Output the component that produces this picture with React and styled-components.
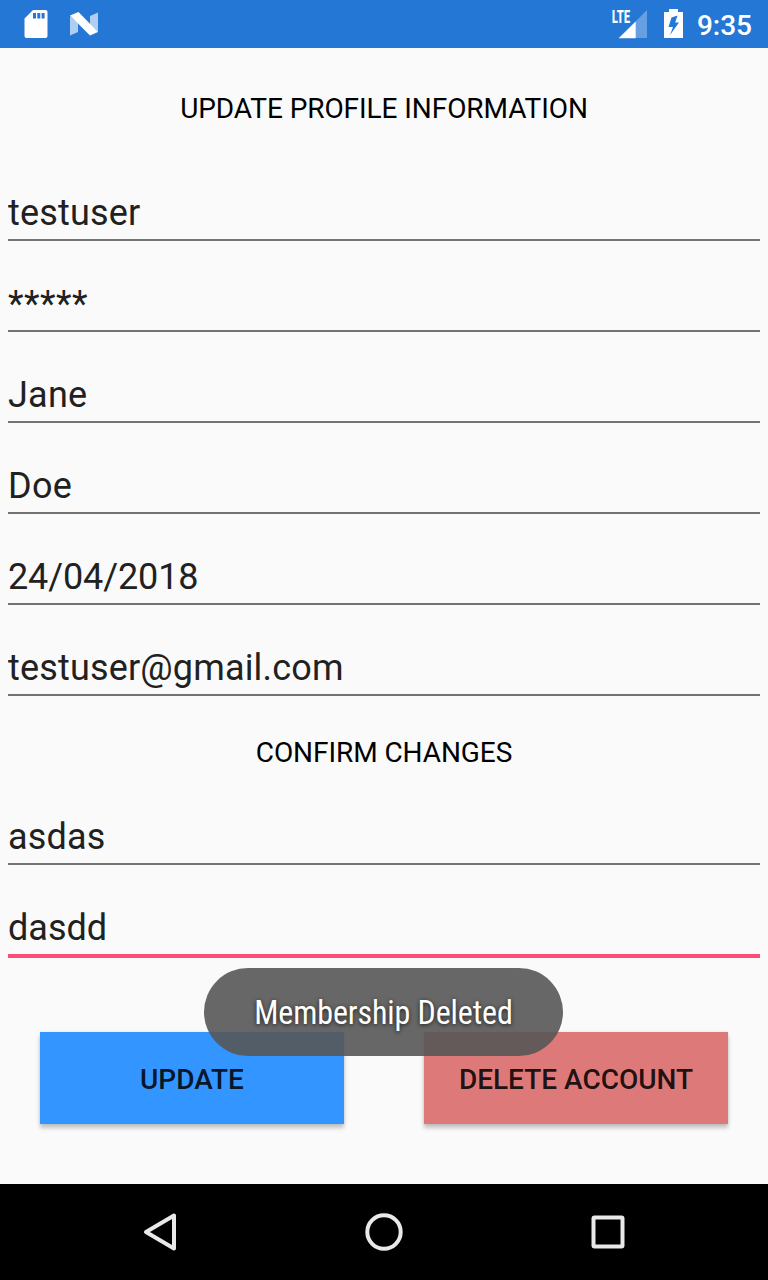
import React from "react";
import styled, { createGlobalStyle } from "styled-components";

const GlobalStyle = createGlobalStyle`
  * { box-sizing: border-box; }
  body { margin: 0; background: #fafafa; font-family: Roboto, sans-serif; }
`;

const Screen = styled.div`
  position: relative;
  display: flex;
  flex-direction: column;
  width: 768px;
  height: 1280px;
  overflow: hidden;
  background: #fafafa;
`;

const StatusBar = styled.header`
  display: flex;
  justify-content: space-between;
  flex: 0 0 48px;
  padding: 0 16px 0 20px;
  background: #2477d5;
`;

const StatusGroup = styled.div`
  display: flex;
  align-items: center;
`;

const Clock = styled.span`
  margin-left: 9px;
  padding-top: 3px;
  color: #fff;
  font-size: 28px;
  font-weight: 500;
  line-height: 45px;
`;

const Form = styled.main`
  display: flex;
  flex-direction: column;
  flex: 1;
`;

const Heading = styled.h1`
  margin: 0;
  height: ${(p) => p.$height}px;
  padding-top: ${(p) => p.$top}px;
  color: #000;
  font-size: 28px;
  font-weight: 400;
  letter-spacing: -0.07px;
  line-height: 34px;
  text-align: center;
`;

const Field = styled.label`
  display: block;
  height: ${(p) => (p.$focused ? 93 : 91)}px;
  margin: 0 8px;
  border-bottom: ${(p) => (p.$focused ? "4px solid #fd4d77" : "2px solid #737373")};
`;

const Input = styled.input`
  display: block;
  width: 100%;
  height: 44px;
  margin-top: 41px;
  padding: 0;
  border: 0;
  outline: 0;
  background: transparent;
  color: #212121;
  font: 400 36px/44px Roboto, sans-serif;
  letter-spacing: ${(p) => p.$tracking || 0}px;
`;

const Actions = styled.div`
  display: flex;
  justify-content: space-between;
  padding: 74px 40px 0;
`;

const Button = styled.button`
  width: 304px;
  height: 92px;
  padding: 4px 0 0;
  border: 0;
  background: ${(p) => p.$color};
  box-shadow: 0 4px 4px rgba(0, 0, 0, 0.21), 0 0 3px rgba(0, 0, 0, 0.1);
  color: rgba(0, 0, 0, 0.87);
  font: 500 28px/34px Roboto, sans-serif;
`;

const Toast = styled.div`
  position: absolute;
  top: 968px;
  left: 204px;
  display: flex;
  align-items: center;
  justify-content: center;
  width: 359px;
  height: 88px;
  padding-top: 2px;
  border-radius: 44px;
  background: rgba(86, 86, 86, 0.9);
  color: #fff;
  font-family: "Roboto Condensed", Roboto, sans-serif;
  font-size: 32px;
  font-stretch: 75%;
  letter-spacing: -0.1px;
  text-shadow: 0 1px 4px rgba(0, 0, 0, 0.73);
  white-space: nowrap;
`;

const ToastText = styled.span`
  display: block;
  transform: scaleY(1.04);
`;

const NavBar = styled.nav`
  display: flex;
  align-items: center;
  justify-content: space-between;
  flex: 0 0 96px;
  padding: 0 136px;
  background: #000;
`;

const SignalLabel = styled.text`
  fill: #fff;
  font: 700 17.5px "Roboto Condensed", Roboto, sans-serif;
  font-stretch: 75%;
`;

const details = [
  { value: "testuser", tracking: 0.18 },
  { value: "*****", tracking: 0.5 },
  { value: "Jane", tracking: 0.25 },
  { value: "Doe", tracking: 0.3 },
  { value: "24/04/2018", tracking: -0.12 },
  { value: "testuser@gmail.com", tracking: 0.17 },
];

const StorageIcon = () => (
  <svg width="32" height="48" viewBox="20 0 32 48">
    <path fill="#fff" fillRule="evenodd" d="M33 10h12.5a2 2 0 0 1 2 2v24a2 2 0 0 1-2 2h-19a2 2 0 0 1-2-2V18.500zM33 13v5.500h3V13zM37.300 13v5.500h3V13zM41.600 13v5.500h3V13z" />
  </svg>
);

const NougatIcon = () => (
  <svg width="48" height="48" viewBox="52 0 48 48">
    <path fill="#fff" opacity=".64" d="M70 16l8 7V32l-8 3.500zM90 16l8-3.500V32l-8-7z" />
    <path fill="#fff" d="M70 15.500l8.500-3.500L98 32l-8 3.500z" />
  </svg>
);

const SignalIcon = () => (
  <svg width="42" height="48" viewBox="609 0 42 48">
    <path fill="#fff" opacity=".3" d="M647 10v28h-28z" />
    <path fill="#fff" d="M635.700 21.500V38.300H618.700z" />
    <SignalLabel x="611.800" y="22.700" textLength="18.500" lengthAdjust="spacingAndGlyphs">LTE</SignalLabel>
  </svg>
);

const BatteryIcon = () => (
  <svg width="37" height="48" viewBox="651 0 37 48">
    <path fill="#fff" fillRule="evenodd" d="M669 9h9v3h5v26h-19V12h5zM677.500 15.500l-6 2-3 9.500h4.500l-3 8 9-12.500h-3.800z" />
  </svg>
);

const NavIcon = ({ children }) => (
  <svg width="48" height="48" viewBox="0 0 48 48" fill="none" stroke="#e9e9e9" strokeWidth="4" strokeLinejoin="round">
    {children}
  </svg>
);

export default function App() {
  return (
    <Screen>
      <GlobalStyle />
      <StatusBar>
        <StatusGroup>
          <StorageIcon />
          <NougatIcon />
        </StatusGroup>
        <StatusGroup>
          <SignalIcon />
          <BatteryIcon />
          <Clock>9:35</Clock>
        </StatusGroup>
      </StatusBar>
      <Form>
        <Heading $height={102} $top={44}>UPDATE PROFILE INFORMATION</Heading>
        {details.map(({ value, tracking }) => (
          <Field key={value}>
            <Input defaultValue={value} $tracking={tracking} spellCheck={false} />
          </Field>
        ))}
        <Heading as="h2" $height={78} $top={40}>CONFIRM CHANGES</Heading>
        <Field>
          <Input defaultValue="asdas" $tracking={0.2} spellCheck={false} />
        </Field>
        <Field $focused>
          <Input defaultValue="dasdd" spellCheck={false} />
        </Field>
        <Actions>
          <Button $color="#3395ff">UPDATE</Button>
          <Button $color="#de7979">DELETE ACCOUNT</Button>
        </Actions>
      </Form>
      <NavBar>
        <NavIcon><path d="M38 7.500v33L10 24z" /></NavIcon>
        <NavIcon><circle cx="24" cy="24" r="16.700" /></NavIcon>
        <NavIcon><rect x="9.500" y="9.500" width="29" height="29" rx="1" /></NavIcon>
      </NavBar>
      <Toast role="status">
        <ToastText>Membership Deleted</ToastText>
      </Toast>
    </Screen>
  );
}
